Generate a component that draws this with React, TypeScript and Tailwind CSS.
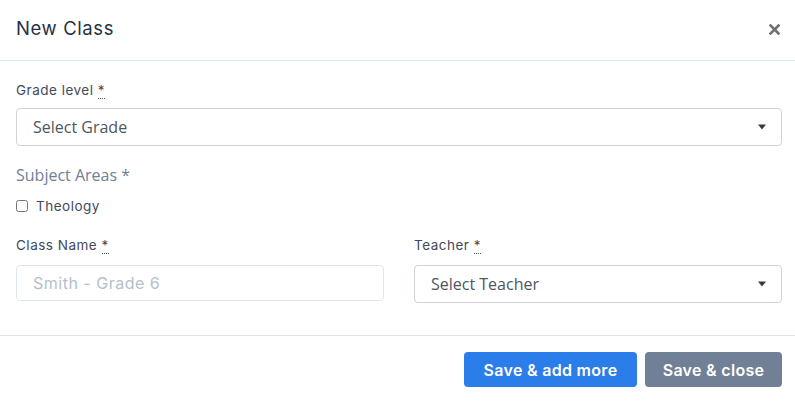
import { useState } from 'react'

const poppins = { fontFamily: 'Inter, "Noto Sans", sans-serif' }

function Caret() {
  return (
    <svg width="10" height="6" viewBox="0 0 10 6" className="shrink-0">
      <path d="M1 0.5h8L5 5.5z" fill="#343a40" />
    </svg>
  )
}

function FieldLabel({ children }: { children: string }) {
  return (
    <label className="block h-[20px] text-[13.5px] leading-[20px] font-normal text-[#3f4a5c] tracking-[0.5px]">
      {children}{' '}
      <abbr
        title="required"
        className="no-underline border-b border-dotted border-[#4a5568]"
      >
        *
      </abbr>
    </label>
  )
}

function SelectBox({ placeholder }: { placeholder: string }) {
  return (
    <div className="flex h-[38px] items-center justify-between rounded-[4px] border border-[#ced4da] bg-white pl-4 pr-[14px] font-['Open_Sans',sans-serif] text-[16px] text-[#4f565d]">
      <span>{placeholder}</span>
      <Caret />
    </div>
  )
}

export default function App() {
  const [checked, setChecked] = useState(false)

  return (
    <div className="h-[401px] w-[795px] overflow-hidden bg-white" style={poppins}>
      <div className="flex h-[61px] items-center justify-between border-b border-[#dde6ef] pl-4 pr-[15px] pb-[2px]">
        <h2 className="text-[18.5px] font-normal text-[#263244] tracking-[0.6px]">New Class</h2>
        <button>
          <svg width="11" height="11" viewBox="0 0 11 11">
            <path d="M1.5 1.5l8 8M9.5 1.5l-8 8" stroke="#707070" strokeWidth="2.6" strokeLinecap="square" />
          </svg>
        </button>
      </div>

      <div className="pl-4 pr-[13px] pt-[19px]">
        <FieldLabel>Grade level</FieldLabel>
        <div className="mt-[8px]">
          <SelectBox placeholder="Select Grade" />
        </div>

        <div className="mt-[17px] h-[24px] font-['Open_Sans',sans-serif] text-[16px] leading-[24px] text-[#718096]">
          Subject Areas *
        </div>
        <label className="mt-[9px] flex h-[20px] items-center gap-[8px] text-[13.5px] tracking-[0.5px] text-[#3f4a5c]">
          <input
            type="checkbox"
            checked={checked}
            onChange={() => setChecked(!checked)}
            className="h-[12px] w-[12px] accent-[#2b7de9]"
          />
          Theology
        </label>

        <div className="mt-[19px] grid grid-cols-2 gap-[30px]">
          <div>
            <FieldLabel>Class Name</FieldLabel>
            <input
              placeholder="Smith - Grade 6"
              className="mt-[10px] h-[36px] w-full rounded-[4px] border border-[#dfe5ee] pl-4 text-[16px] tracking-[0.5px] outline-none placeholder:text-[#b4bfce]"
            />
          </div>
          <div>
            <FieldLabel>Teacher</FieldLabel>
            <div className="mt-[10px]">
              <SelectBox placeholder="Select Teacher" />
            </div>
          </div>
        </div>
      </div>

      <div className="mt-[32px] flex justify-end gap-[8px] border-t border-[#dde6ef] pr-[13px] pt-[16px]">
        <button className="h-[35px] w-[173px] rounded-[4px] bg-[#2b7de9] text-[16px] font-semibold tracking-[0.3px] text-white">
          Save &amp; add more
        </button>
        <button className="h-[35px] w-[137px] rounded-[4px] bg-[#718096] text-[16px] font-semibold tracking-[0.3px] text-white">
          Save &amp; close
        </button>
      </div>
    </div>
  )
}
